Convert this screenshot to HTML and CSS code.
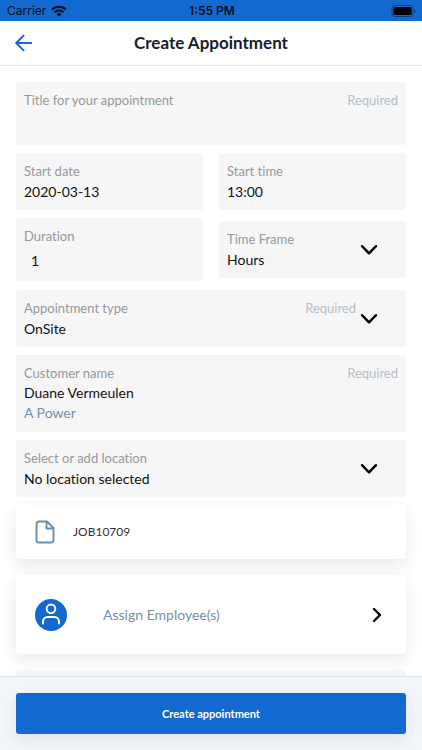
FILE: index.html
```html
<!DOCTYPE html>
<html lang="en">
<head>
<meta charset="utf-8">
<meta name="viewport" content="width=device-width, initial-scale=1">
<title>Create Appointment</title>
<link rel="stylesheet" href="styles.css">
</head>
<body>
<div class="status-bar">
  <div class="carrier">
    <span>Carrier</span>
    <svg width="16" height="12" viewBox="0 0 16 12" aria-hidden="true">
      <path d="M1 4.6a10 10 0 0 1 14 0" fill="none" stroke="#03101f" stroke-width="2.2"/>
      <path d="M3.6 7.3a6.2 6.2 0 0 1 8.8 0" fill="none" stroke="#03101f" stroke-width="2"/>
      <path d="M8 11.6 5.6 9.2a3.4 3.4 0 0 1 4.8 0z" fill="#03101f"/>
    </svg>
  </div>
  <time class="clock">1:55 PM</time>
  <div class="battery">
    <svg width="26" height="12" viewBox="0 0 26 12" aria-hidden="true">
      <rect x="1" y=".5" width="21" height="11" rx="2.8" fill="none" stroke="#0b3f80"/>
      <rect x="2.5" y="2" width="18" height="8" rx="1.6" fill="#000"/>
      <path d="M23.4 4.2v3.6q1.3-.6 1.3-1.8t-1.3-1.8z" fill="#0b3f80"/>
    </svg>
  </div>
</div>

<header class="header">
  <button class="back" type="button" aria-label="Back">
    <svg width="18" height="18" viewBox="0 0 18 18" aria-hidden="true">
      <path d="M16.2 9H1.4M8.6 1.6 1.2 9l7.4 7.4" fill="none" stroke="#1269cf" stroke-width="1.9" stroke-linecap="round" stroke-linejoin="round"/>
    </svg>
  </button>
  <h1 class="title">Create Appointment</h1>
</header>

<form class="page" id="appointment">
  <div class="field">
    <textarea class="notes" aria-label="Title" placeholder="Title for your appointment"></textarea>
    <span class="required">Required</span>
  </div>

  <div class="row">
    <div class="field">
      <div class="body">
        <label class="label" for="date">Start date</label>
        <input class="value" id="date" type="text" value="2020-03-13">
      </div>
    </div>
    <div class="field">
      <div class="body">
        <label class="label" for="time">Start time</label>
        <input class="value" id="time" type="text" value="13:00">
      </div>
    </div>
  </div>

  <div class="row">
    <div class="field">
      <div class="body">
        <label class="label" for="duration">Duration</label>
        <input class="value boxed" id="duration" type="text" inputmode="numeric" value="1">
      </div>
    </div>
    <div class="field">
      <div class="body">
        <label class="label" for="frame">Time Frame</label>
        <select class="value" id="frame"><option>Hours</option></select>
      </div>
      <svg class="chevron" width="18" height="12" viewBox="0 0 18 12" aria-hidden="true"><path d="m2 2.2 7 7.2 7-7.2"/></svg>
    </div>
  </div>

  <div class="field after-row">
    <div class="body">
      <div class="label-line">
        <label class="label" for="type">Appointment type</label>
        <span class="required">Required</span>
      </div>
      <select class="value" id="type"><option>OnSite</option></select>
    </div>
    <svg class="chevron" width="18" height="12" viewBox="0 0 18 12" aria-hidden="true"><path d="m2 2.2 7 7.2 7-7.2"/></svg>
  </div>

  <div class="field customer">
    <div class="body">
      <div class="label-line">
        <label class="label" for="customer">Customer name</label>
        <span class="required">Required</span>
      </div>
      <input class="value" id="customer" type="text" value="Duane Vermeulen">
      <div class="company">A Power</div>
    </div>
  </div>

  <div class="field">
    <div class="body">
      <label class="label" for="location">Select or add location</label>
      <select class="value" id="location"><option>No location selected</option></select>
    </div>
    <svg class="chevron" width="18" height="12" viewBox="0 0 18 12" aria-hidden="true"><path d="m2 2.2 7 7.2 7-7.2"/></svg>
  </div>

  <div class="card job">
    <svg width="20" height="24" viewBox="0 0 20 24" aria-hidden="true">
      <path d="M12 1.5H4A2.5 2.5 0 0 0 1.5 4v16A2.5 2.5 0 0 0 4 22.5h12a2.5 2.5 0 0 0 2.5-2.5V8zM11.5 1.8V8.5h6.7" fill="none" stroke="#6d8ea8" stroke-width="1.9" stroke-linejoin="round"/>
    </svg>
    <span>JOB10709</span>
  </div>

  <button class="card assign" type="button">
    <svg width="32" height="32" viewBox="0 0 32 32" aria-hidden="true">
      <circle cx="16" cy="16" r="16" fill="#1269cf"/>
      <g fill="none" stroke="#fff" stroke-width="1.9" stroke-linecap="round">
        <circle cx="16" cy="9.8" r="4.3"/>
        <path d="M8 24.500v-2a4.5 4.5 0 0 1 4.5-4.5h7a4.5 4.5 0 0 1 4.5 4.5v2"/>
      </g>
    </svg>
    <span class="assign-text">Assign Employee(s)</span>
    <svg class="next" width="10" height="16" viewBox="0 0 10 16" aria-hidden="true"><path d="m2 2 6 6-6 6"/></svg>
  </button>

  <div class="field more"></div>
</form>

<footer class="footer">
  <button class="submit" type="submit" form="appointment">Create appointment</button>
</footer>
</body>
</html>
```
FILE: styles.css
```css
* {
  box-sizing: border-box;
}

body {
  display: flex;
  flex-direction: column;
  height: 100vh;
  margin: 0;
  background: #fff;
  color: #111;
  font: 14px/20px Lato, "Open Sans", sans-serif;
  font-variant-ligatures: none;
}

button,
input,
select,
textarea {
  margin: 0;
  padding: 0;
  border: 0;
  border-radius: 0;
  background: none;
  color: inherit;
  font: inherit;
  font-variant-ligatures: none;
  appearance: none;
}

svg {
  display: block;
  flex: none;
}

.status-bar {
  display: grid;
  grid-template-columns: 1fr auto 1fr;
  align-items: center;
  flex: none;
  height: 21px;
  padding: 0 5px 0 7px;
  background: #1269cf;
  color: #03101f;
  font: 12px/20px Inter, sans-serif;
}

.carrier {
  display: flex;
  align-items: center;
  gap: 5px;
}

.clock {
  font-weight: 600;
}

.battery {
  justify-self: end;
}

.header {
  display: grid;
  grid-template-columns: 48px 1fr 48px;
  align-items: center;
  flex: none;
  height: 45px;
  border-bottom: 1px solid #e4e6e9;
}

.back {
  display: flex;
  padding-left: 15px;
}

.title {
  margin: 0;
  color: #17202c;
  font-size: 17px;
  font-weight: 700;
  line-height: 24px;
  text-align: center;
}

.page {
  display: flex;
  flex: 1;
  flex-direction: column;
  gap: 8px;
  min-height: 0;
  padding: 16px 16px 0;
  overflow: hidden;
}

.row {
  display: grid;
  grid-template-columns: 1fr 1fr;
  align-items: center;
  gap: 16px;
}

.field {
  display: flex;
  flex: none;
  align-items: center;
  gap: 4px;
  min-width: 0;
  padding: 8px;
  border-radius: 3px;
  background: #f6f6f6;
}

.after-row {
  margin-top: 1px;
}

.body {
  display: flex;
  flex: 1;
  flex-direction: column;
  gap: 1px;
  min-width: 0;
}

.label-line {
  display: flex;
  justify-content: space-between;
}

.label,
.required,
.notes {
  font-size: 13px;
}

.label,
.notes::placeholder {
  color: #97989b;
  opacity: 1;
}

.required {
  color: #b4c1cc;
}

.value {
  width: 100%;
  height: 20px;
  color: #111;
}

.boxed {
  height: 26px;
  padding-left: 7px;
}

.notes {
  flex: 1;
  min-width: 0;
  height: 47px;
  resize: none;
}

.notes + .required {
  align-self: flex-start;
}

.chevron {
  margin-right: 20px;
}

.chevron path,
.next path {
  fill: none;
  stroke: #000;
  stroke-width: 2.4;
  stroke-linecap: round;
  stroke-linejoin: round;
}

.customer .body {
  gap: 0;
}

.customer {
  padding-bottom: 9px;
}

.company {
  color: #7590a6;
}

.card {
  display: flex;
  flex: none;
  align-items: center;
  border-radius: 3px;
  background: #fff;
  box-shadow: 0 6px 16px rgba(30, 40, 70, 0.1);
}

.job {
  gap: 18px;
  height: 54px;
  padding: 0 19px;
  color: #333;
  font-size: 12px;
}

.assign {
  gap: 36px;
  height: 79px;
  margin-top: 8px;
  padding: 0 24px 0 19px;
  color: #7590a6;
  text-align: left;
}

.assign-text {
  flex: 1;
}

.more {
  height: 57px;
  margin-top: 8px;
}

.footer {
  flex: none;
  padding: 16px;
  border-top: 1px solid #dfe3e7;
  background: #f3f6fa;
}

.submit {
  display: block;
  width: 100%;
  height: 41px;
  border-radius: 3px;
  background: #1269cf;
  box-shadow: 0 6px 16px rgba(30, 40, 70, 0.09);
  color: #fff;
  font-size: 11px;
  font-weight: 700;
}
```
